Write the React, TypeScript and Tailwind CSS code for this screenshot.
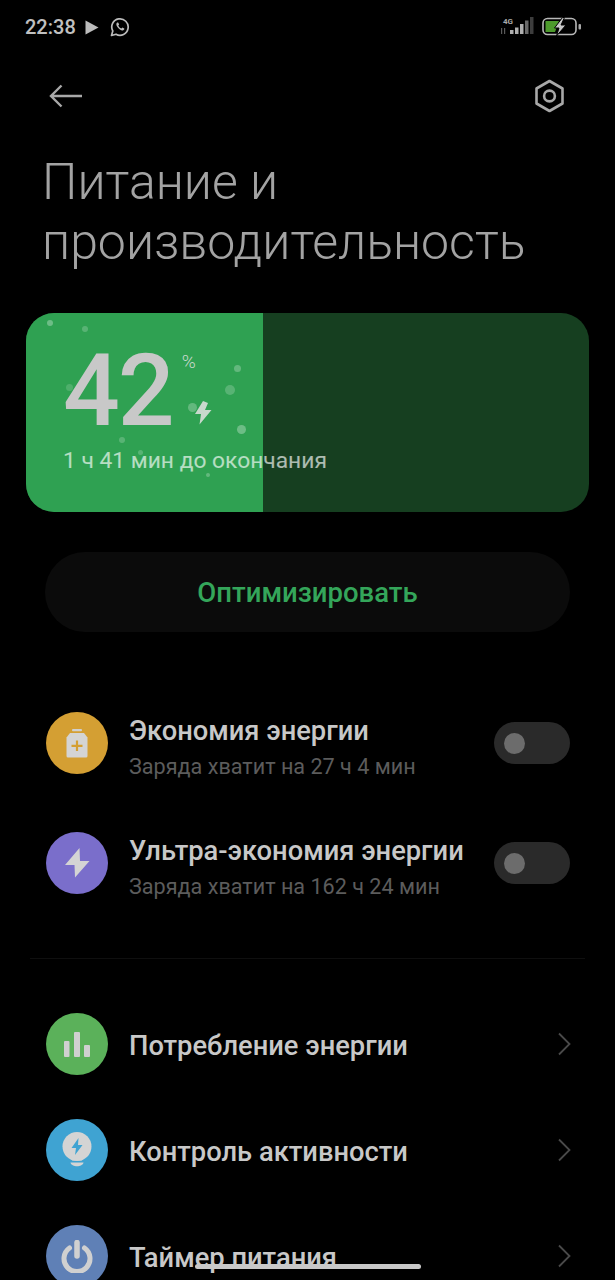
import React from "react";

const font = { fontFamily: "Roboto, sans-serif" };

function Bubble({ x, y, s, o }: { x: number; y: number; s: number; o: number }) {
  return (
    <span
      className="absolute rounded-full bg-white"
      style={{ left: x - s / 2, top: y - s / 2, width: s, height: s, opacity: o }}
    />
  );
}

const bubbles = [
  [24, 10, 6, 0.3], [59, 16, 6, 0.2], [211, 55, 7, 0.25], [204, 77, 10, 0.2], [43, 74, 7, 0.15],
  [166, 94, 9, 0.25], [215, 116, 9, 0.3], [96, 127, 6, 0.2], [114, 139, 5, 0.2], [182, 162, 4, 0.25],
];

function Toggle() {
  return (
    <div className="w-[76px] h-[42px] rounded-full bg-[#2a2a2a] flex items-center pl-[10px] shrink-0">
      <div className="w-[21px] h-[21px] rounded-full bg-[#6c6c6c]" />
    </div>
  );
}

function Circle({ color, children }: { color: string; children: React.ReactNode }) {
  return (
    <div className={`w-[62px] h-[62px] rounded-full flex items-center justify-center shrink-0 ${color}`}>
      {children}
    </div>
  );
}

function ToggleRow({ color, icon, title, sub }: { color: string; icon: React.ReactNode; title: string; sub: string }) {
  return (
    <div className="h-[120px] flex items-center pl-[46px] pr-[45px]">
      <Circle color={color}>{icon}</Circle>
      <div className="ml-[21px] flex-1 min-w-0 mt-[12px]">
        <div className="text-[27.3px] leading-[36px] font-medium text-[#c8c8c8] whitespace-nowrap">{title}</div>
        <div className="text-[21.6px] leading-[36px] text-[#5c5c5c] whitespace-nowrap">{sub}</div>
      </div>
      <Toggle />
    </div>
  );
}

function Chevron() {
  return (
    <svg width="14" height="24" viewBox="0 0 14 24" fill="none" className="shrink-0">
      <path d="M2 1.5 L12.5 12 L2 22.5" stroke="#4a4a4a" strokeWidth="1.8" />
    </svg>
  );
}

function NavRow({ color, icon, title }: { color: string; icon: React.ReactNode; title: string }) {
  return (
    <div className="h-[106px] flex items-center pl-[46px] pr-[44px] shrink-0">
      <Circle color={color}>{icon}</Circle>
      <div className="ml-[21px] mt-[4px] flex-1 text-[27.3px] font-medium text-[#c8c8c8] whitespace-nowrap">{title}</div>
      <Chevron />
    </div>
  );
}

export default function App() {
  return (
    <div className="relative w-[615px] h-[1280px] overflow-hidden bg-black" style={font}>
      {/* status bar */}
      <div className="h-[54px] flex items-center justify-between pl-[25px] pr-[33px]">
        <div className="flex items-center">
          <span className="text-[20px] font-medium text-[#c0c0c0]">22:38</span>
          <svg width="14" height="15" viewBox="0 0 14 15" className="ml-[9px]">
            <path d="M0.5 0.5 L13.5 7.5 L0.5 14.5 Z" fill="#bcbcbc" />
          </svg>
          <svg width="20" height="20" viewBox="0 0 20 20" fill="none" className="ml-[11px]">
            <path d="M1.5 18.5 L2.8 14 A8.2 8.2 0 1 1 6 17.2 Z" stroke="#bcbcbc" strokeWidth="1.7" strokeLinejoin="round" />
            <path d="M7.2 5.6 C6 6.5 6 8.2 7.6 10.3 C9.4 12.8 11.8 14 13.3 13.2 C14.4 12.6 14.5 11.8 14.2 11.5 L12.4 10.6 L11.4 11.6 C10 11.1 8.9 10 8.3 8.5 L9.2 7.5 L8.3 5.7 C8 5.4 7.6 5.3 7.2 5.6 Z" fill="#bcbcbc" />
          </svg>
        </div>
        <div className="flex items-center">
          <svg width="34" height="20" viewBox="0 0 34 20" className="mr-[8px]">
            <text x="3" y="7" fontSize="8" fontWeight="700" fill="#a8a8a8" fontFamily="Roboto, sans-serif">4G</text>
            <rect x="1" y="11" width="1.2" height="6" fill="#5a5a5a" />
            <rect x="4" y="11" width="1.2" height="6" fill="#5a5a5a" />
            <rect x="10" y="13" width="3.5" height="4" fill="#b0b0b0" />
            <rect x="15" y="10.5" width="3.5" height="6.5" fill="#b0b0b0" />
            <rect x="20" y="7" width="3.5" height="10" fill="#b0b0b0" />
            <rect x="25" y="3.5" width="3.5" height="13.5" fill="#6a6a6a" />
            <rect x="30" y="0" width="3.5" height="17" fill="#3d3d3d" />
          </svg>
          <svg width="40" height="20" viewBox="0 0 40 20" fill="none">
            <rect x="1" y="1.5" width="33" height="16" rx="4.5" stroke="#b8b8b8" strokeWidth="1.6" />
            <path d="M3.5 4 H17 L13 15 H3.5 Z" fill="#4d9a2c" />
            <rect x="36.5" y="7" width="2.5" height="5.5" rx="1" fill="#a8a8a8" />
            <path d="M20.5 0.5 L12.5 11 H17 L14.5 19 L24 8 H19 L22.5 0.5 Z" fill="#c8c8c8" stroke="#000" strokeWidth="1" />
          </svg>
        </div>
      </div>

      {/* header */}
      <div className="h-[84px] flex items-center justify-between pl-[49px] pr-[50px]">
        <svg width="34" height="24" viewBox="0 0 34 24" fill="none">
          <path d="M33 12 H2 M12.5 1.5 L2 12 L12.5 22.5" stroke="#a8a8a8" strokeWidth="2.4" />
        </svg>
        <svg width="31" height="34" viewBox="0 0 31 34" fill="none">
          <path d="M15.5 2 L28.5 9.5 V24.5 L15.5 32 L2.5 24.5 V9.5 Z" stroke="#a8a8a8" strokeWidth="2.6" strokeLinejoin="round" />
          <circle cx="15.5" cy="17" r="5.4" stroke="#a8a8a8" strokeWidth="2.6" />
        </svg>
      </div>

      {/* title */}
      <h1 className="mt-[14px] pl-[42px] text-[50px] leading-[60px] font-light text-[#a3a3a3] whitespace-nowrap">
        Питание и<br />производительность
      </h1>

      {/* battery card */}
      <div className="relative mt-[41px] mx-[26px] h-[199px] rounded-[28px] overflow-hidden bg-[#163f20]">
        <div className="absolute left-0 top-0 bottom-0 w-[237px] bg-[#2fa152]" />
        {bubbles.map(([x, y, s, o], i) => (
          <Bubble key={i} x={x} y={y} s={s} o={o} />
        ))}
        <div className="relative pl-[37px] pt-[28px]">
          <div className="flex items-start h-[100px]">
            <span className="text-[100px] leading-[100px] font-medium text-[#c8c8c8] tracking-[-2px]">42</span>
            <div className="ml-[9px] h-[100px] relative w-[40px]">
              <span className="block mt-[9px] text-[19px] leading-[24px] font-light text-[#c8d8cc]">%</span>
              <svg width="17" height="24" viewBox="0 0 17 24" className="mt-[27px] ml-[13px]">
                <path d="M8 0 L0 13 H6 L4.5 23.5 L16.5 9 H10 L13 2 Z" fill="#c8d8cc" />
              </svg>
            </div>
          </div>
          <div className="mt-[5px] text-[22.8px] leading-[30px] text-white/65 whitespace-nowrap">1 ч 41 мин до окончания</div>
        </div>
      </div>

      {/* button */}
      <div className="mt-[40px] mx-[45px] h-[80px] rounded-full bg-[#0b0b0b] flex items-center justify-center pt-[2px] text-[27.5px] font-medium text-[#34a65a]">
        Оптимизировать
      </div>

      {/* toggles */}
      <div className="mt-[51px]">
        <ToggleRow
          color="bg-[#d49f33]"
          title="Экономия энергии"
          sub="Заряда хватит на 27 ч 4 мин"
          icon={
            <svg width="22" height="29" viewBox="0 0 22 29">
              <rect x="6" y="0" width="10" height="2.2" rx="1" fill="#d0d0d0" />
              <path d="M4 4 H18 L21.5 8.5 V27 A1.5 1.5 0 0 1 20 28.5 H2 A1.5 1.5 0 0 1 0.5 27 V8.5 Z" fill="#d4d4d4" />
              <path d="M11 11.5 V22 M5.5 16.8 H16.5" stroke="#d49f33" strokeWidth="2.2" />
            </svg>
          }
        />
        <ToggleRow
          color="bg-[#7a6ecb]"
          title="Ультра-экономия энергии"
          sub="Заряда хватит на 162 ч 24 мин"
          icon={
            <svg width="25" height="30" viewBox="0 0 25 30">
              <path d="M14.5 0 L0 17 H9.5 L10 29.5 L24.5 13 H15 Z" fill="#d4d4d4" />
            </svg>
          }
        />
      </div>

      {/* divider */}
      <div className="mt-[35px] mx-[30px] h-px bg-[#0f0f0f]" />

      {/* nav */}
      <div className="mt-[32px]">
        <NavRow
          color="bg-[#5bb15a]"
          title="Потребление энергии"
          icon={
            <svg width="26" height="25" viewBox="0 0 26 25">
              <rect x="0" y="9" width="5.5" height="16" rx="1" fill="#d0d0d0" />
              <rect x="10" y="0" width="6" height="25" rx="1" fill="#d0d0d0" />
              <rect x="20" y="13" width="6" height="12" rx="1" fill="#d0d0d0" />
            </svg>
          }
        />
        <NavRow
          color="bg-[#3fa3d2]"
          title="Контроль активности"
          icon={
            <svg width="30" height="36" viewBox="0 0 30 36">
              <circle cx="15" cy="14.5" r="14.5" fill="#d4d4d4" />
              <path d="M9 24 H21 L20 28.5 H10 Z" fill="#d4d4d4" />
              <path d="M8.5 30.5 H21.5 C20.5 35.5 9.5 35.5 8.5 30.5 Z" fill="#d4d4d4" />
              <path d="M16.5 6 L9.5 16 H14 L13 23 L20.5 13 H16 Z" fill="#3fa3d2" />
            </svg>
          }
        />
        <NavRow
          color="bg-[#5f80b6]"
          title="Таймер питания"
          icon={
            <svg width="32" height="33" viewBox="0 0 32 33" fill="none">
              <path d="M8.5 8 A13 13 0 1 0 23.5 8" stroke="#d0d0d0" strokeWidth="5" strokeLinecap="round" />
              <path d="M16 2.5 V16" stroke="#d0d0d0" strokeWidth="5.5" strokeLinecap="round" />
            </svg>
          }
        />
      </div>

      {/* gesture bar */}
      <div className="absolute left-[195px] top-[1264px] w-[226px] h-[5px] rounded-full bg-[#c8c8c8]" />
    </div>
  );
}
